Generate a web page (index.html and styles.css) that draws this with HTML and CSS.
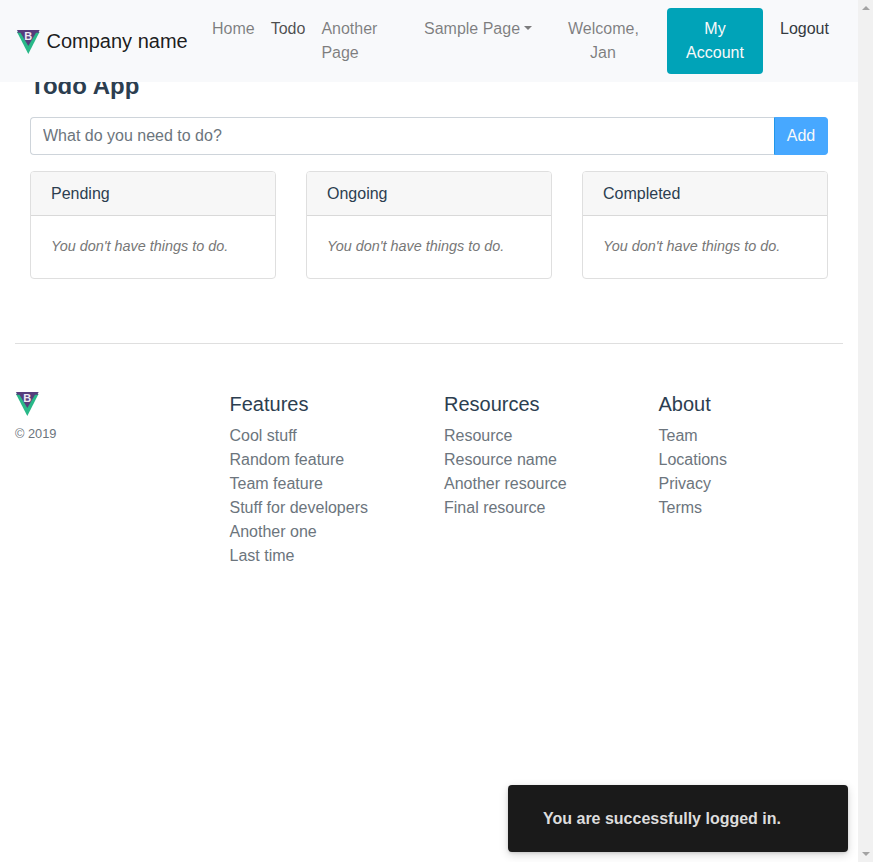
FILE: index.html
```html
<!DOCTYPE html>
<html lang="en">
<head>
<meta charset="utf-8">
<title>Todo App</title>
<link rel="stylesheet" href="styles.css">
</head>
<body>
<svg class="defs" aria-hidden="true">
  <symbol id="logo" viewBox="0 0 24 26">
    <path d="M1 4 L4 2 H20 L23.500 4 L12.300 26 Z" fill="#29b888"/>
    <path d="M.8 2 H23.800 L22.600 3.500 L23.300 4.800 H20 L12.300 18 L4.500 4.800 H1.200 L2 3.500 Z" fill="#563d7c"/>
    <text x="12.300" y="12.100" class="logo-letter">B</text>
  </symbol>
</svg>
<div class="page">
  <header class="navbar">
    <a class="brand"><svg class="logo"><use href="#logo"/></svg><span>Company name</span></a>
    <nav class="nav">
      <a class="link home">Home</a>
      <a class="link active">Todo</a>
      <a class="link another">Another Page</a>
      <a class="link sample">Sample Page<span class="caret"></span></a>
    </nav>
    <div class="account">
      <span class="link welcome">Welcome, Jan</span>
      <a class="button">My Account</a>
      <a class="logout">Logout</a>
    </div>
  </header>
  <main class="main">
    <h1 class="title">Todo App</h1>
    <form class="entry">
      <input class="field" type="text" placeholder="What do you need to do?">
      <button class="add" type="button">Add</button>
    </form>
    <div class="cards">
      <section class="card"><div class="card-head">Pending</div><p class="empty">You don't have things to do.</p></section>
      <section class="card"><div class="card-head">Ongoing</div><p class="empty">You don't have things to do.</p></section>
      <section class="card"><div class="card-head">Completed</div><p class="empty">You don't have things to do.</p></section>
    </div>
  </main>
  <footer class="footer">
    <div><svg class="logo small"><use href="#logo"/></svg><small class="copy">© 2019</small></div>
    <div><h5>Features</h5><ul><li>Cool stuff</li><li>Random feature</li><li>Team feature</li><li>Stuff for developers</li><li>Another one</li><li>Last time</li></ul></div>
    <div><h5>Resources</h5><ul><li>Resource</li><li>Resource name</li><li>Another resource</li><li>Final resource</li></ul></div>
    <div><h5>About</h5><ul><li>Team</li><li>Locations</li><li>Privacy</li><li>Terms</li></ul></div>
  </footer>
</div>
<div class="scrollbar"><span class="arrow up"></span><span class="arrow down"></span></div>
<div class="toast">You are successfully logged in.</div>
</body>
</html>
```

FILE: styles.css
```css
* { box-sizing: border-box; }
body {
  margin: 0;
  height: 862px;
  display: flex;
  overflow: hidden;
  background: #fff;
  color: #2c3e50;
  font: 16px/24px "Liberation Sans", Arial, sans-serif;
}
.defs { position: absolute; width: 0; height: 0; }
.logo-letter { font-size: 11px; font-weight: 700; text-anchor: middle; fill: #eee9f3; }
.page { width: 858px; flex: none; }

.navbar {
  position: relative;
  z-index: 2;
  height: 82px;
  padding: 8px 12px 8px 16px;
  display: flex;
  background: #f8f9fb;
}
.brand {
  width: 188px;
  display: flex;
  align-items: center;
  font-size: 20px;
  line-height: 30px;
  color: rgba(0, 0, 0, .9);
  white-space: nowrap;
}
.logo { display: block; width: 24px; height: 26px; margin-right: 6.5px; flex: none; }
.nav { display: flex; width: 356px; flex: none; }
.link { padding: 9px 8px 8px; color: rgba(0, 0, 0, .5); }
.active { color: rgba(0, 0, 0, .7); }
.another { width: 102.600px; padding-right: 30px; flex: none; }
.sample { white-space: nowrap; }
.caret {
  display: inline-block;
  margin-left: 4.080px;
  vertical-align: 4.080px;
  border: 4.800px solid transparent;
  border-top-color: currentColor;
  border-bottom: 0;
}
.account { display: flex; align-items: flex-start; }
.welcome { width: 86px; text-align: center; }
.button {
  width: 96px;
  height: 66px;
  margin-left: 21px;
  padding: 9px 16px;
  border-radius: 4px;
  background: #00a3b8;
  color: #f8f9fa;
  text-align: center;
}
.logout { padding: 9px 17px; color: #343a40; }
.nav + .account .button { margin-left: 21px; }

.main { display: flow-root; height: 261px; padding: 0 30px; }
.title { margin: -11px 0 17px; font-size: 24px; line-height: 29px; }
.entry { display: flex; height: 38px; margin-bottom: 16px; }
.field {
  flex: 1;
  min-width: 0;
  padding: 6px 12px;
  border: 1px solid #ced4da;
  border-right: 0;
  border-radius: 4px 0 0 4px;
  font: inherit;
}
.field::placeholder { color: #6c757d; opacity: 1; }
.add {
  width: 54px;
  padding: 0;
  border: 1px solid #47a8ff;
  border-left-color: #2196e8;
  border-radius: 0 4px 4px 0;
  background: #47a8ff;
  color: #f8f9fa;
  font: inherit;
}
.cards { display: grid; grid-template-columns: repeat(3, 1fr); gap: 30px; }
.card { height: 108px; border: 1px solid #dfdfdf; border-radius: 4px; overflow: hidden; }
.card-head {
  height: 44px;
  padding: 10px 20px;
  border-bottom: 1px solid #d9d9d9;
  background: #f7f7f7;
}
.empty { margin: 18px 20px; color: #777; font-size: 14.4px; font-style: italic; }

.footer {
  margin: 0 15px;
  padding-top: 47px;
  border-top: 1px solid #dfdfdf;
  display: grid;
  grid-template-columns: repeat(4, 184.5px);
  column-gap: 30px;
  color: #6c757d;
}
.small { margin: -1px 0 6px; }
.copy { display: block; font-size: 12.8px; }
.footer h5 { margin: 1px 0 8px; font-size: 20px; line-height: 24px; font-weight: 400; color: #2c3e50; }
.footer ul { margin: 0; padding: 0; list-style: none; }

.scrollbar {
  width: 15px;
  padding: 6px 4px;
  background: #f1f1f1;
  display: flex;
  flex-direction: column;
  align-items: center;
  justify-content: space-between;
}
.arrow { border: 4px solid transparent; }
.up { border-top: 0; border-bottom-color: #a3a3a3; }
.down { border-bottom: 0; border-top-color: #a3a3a3; }
.toast {
  position: absolute;
  right: 25px;
  bottom: 10px;
  width: 340px;
  height: 67px;
  padding: 22px 35px;
  border-radius: 4px;
  background: #1a1a1a;
  color: #ddd;
  font-weight: 700;
  box-shadow: 0 1px 3px rgba(0, 0, 0, .12), 0 3px 10px rgba(0, 0, 0, .16);
}
```
